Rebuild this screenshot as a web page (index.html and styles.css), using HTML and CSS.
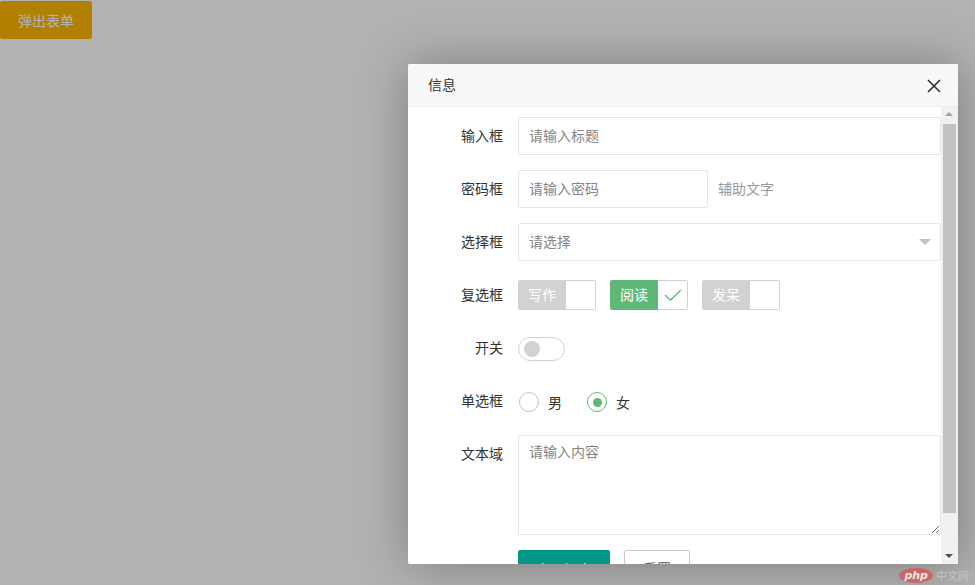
FILE: index.html
```html
<!DOCTYPE html>
<html lang="zh-CN">
<head>
<meta charset="utf-8">
<title>弹出表单</title>
<link rel="stylesheet" href="styles.css">
</head>
<body>
<div class="page">
  <button class="btn-warm">弹出表单</button>
</div>
<div class="shade"></div>
<div class="layer">
  <div class="layer-title">信息
    <svg class="layer-close" width="14" height="14" viewBox="0 0 14 14"><path d="M1 1 L13 13 M13 1 L1 13" stroke="#2f2f2f" stroke-width="1.6" fill="none"/></svg>
  </div>
  <div class="layer-content">
    <div class="pane">
      <form class="form">
        <div class="item">
          <label class="label">输入框</label>
          <div class="block"><input class="input" placeholder="请输入标题"></div>
        </div>
        <div class="item">
          <label class="label">密码框</label>
          <div class="inline"><input class="input" type="password" placeholder="请输入密码"></div>
          <div class="aux">辅助文字</div>
        </div>
        <div class="item">
          <label class="label">选择框</label>
          <div class="block select"><input class="input" placeholder="请选择" readonly><i class="edge"></i></div>
        </div>
        <div class="item">
          <label class="label">复选框</label>
          <div class="block row">
            <div class="cb"><span>写作</span><i></i></div>
            <div class="cb checked"><span>阅读</span><i><svg width="18" height="12" viewBox="0 0 18 12"><path d="M1 6 L6.5 11 L17 1" stroke="#5FB878" stroke-width="1.3" fill="none"/></svg></i></div>
            <div class="cb"><span>发呆</span><i></i></div>
          </div>
        </div>
        <div class="item">
          <label class="label">开关</label>
          <div class="block row"><div class="switch"><i></i></div></div>
        </div>
        <div class="item">
          <label class="label">单选框</label>
          <div class="block row">
            <div class="radio"><i class="circle"></i><span>男</span></div>
            <div class="radio on"><i class="circle"><b></b></i><span>女</span></div>
          </div>
        </div>
        <div class="item">
          <label class="label">文本域</label>
          <div class="block"><textarea class="textarea" placeholder="请输入内容"></textarea></div>
        </div>
        <div class="item">
          <div class="block offset row">
            <button type="button" class="btn">立即提交</button>
            <button type="button" class="btn btn-primary">重置</button>
          </div>
        </div>
      </form>
    </div>
    <div class="scrollbar">
      <div class="sb-btn up"></div>
      <div class="sb-track"><div class="sb-thumb"></div></div>
      <div class="sb-btn down"></div>
    </div>
  </div>
</div>
<div class="watermark"><span class="php">php</span><span class="cn">中文网</span></div>
</body>
</html>
```
FILE: styles.css
```css
* { box-sizing: border-box; }
html, body { margin: 0; padding: 0; }
body {
  width: 975px; height: 585px; overflow: hidden;
  background: #fff;
  font-family: "Helvetica Neue", Helvetica, "Noto Sans CJK SC", Arial, sans-serif;
  font-size: 14px; color: #333;
  position: relative;
}
.page { padding-top: 1px; }
.btn-warm {
  display: block; height: 38px; line-height: 38px; padding: 0 18px;
  background: #FFB800; color: #fff; border: none; border-radius: 2px;
  font: inherit; font-size: 14px;
}
.shade { position: absolute; left: 0; top: 0; width: 975px; height: 585px; background: rgba(0,0,0,0.3); }
.layer {
  position: absolute; left: 408px; top: 64px; width: 550px; height: 500px;
  background: #fff; border-radius: 2px;
  box-shadow: 1px 1px 50px rgba(0,0,0,.3);
  display: flex; flex-direction: column;
}
.layer-title {
  height: 43px; line-height: 42px; padding: 0 80px 0 20px;
  background: #F8F8F8; border-bottom: 1px solid #eee; color: #333;
  border-radius: 2px 2px 0 0; position: relative;
}
.layer-close { position: absolute; right: 17px; top: 15px; }
.layer-content { flex: 1; display: flex; overflow: hidden; }
.pane { flex: 1; overflow: hidden; }
.form { padding-top: 10px; margin: 0; }
.item { display: flex; align-items: flex-start; margin-bottom: 15px; min-height: 38px; }
.label {
  width: 110px; flex: none; padding: 9px 15px; line-height: 20px; text-align: right; color: #333;
}
.block { flex: 1; position: relative; }
.offset { margin-left: 110px; }
.row { display: flex; align-items: flex-start; }
.inline { width: 190px; margin-right: 10px; }
.aux { padding: 9px 0; line-height: 20px; color: #999; }
.input, .textarea {
  display: block; width: 100%; height: 38px; border: 1px solid #e6e6e6; border-radius: 2px;
  padding-left: 10px; font: inherit; font-size: 14px; color: #333; background: #fff; outline: none;
}
.input::placeholder, .textarea::placeholder { color: #858585; }
.textarea { height: 100px; padding: 6px 10px; line-height: 20px; resize: vertical; }
.edge {
  position: absolute; right: 10px; top: 50%; margin-top: -3px; width: 0; height: 0;
  border-width: 6px; border-style: solid; border-color: #c2c2c2 transparent transparent transparent;
}
.cb { display: flex; height: 30px; margin-top: 4px; margin-right: 14px; }
.cb span {
  padding: 0 10px; line-height: 30px; background: #d2d2d2; color: #fff; border-radius: 2px 0 0 2px;
}
.cb i {
  width: 30px; height: 30px; border: 1px solid #d2d2d2; border-left: none; border-radius: 0 2px 2px 0;
  display: flex; align-items: center; justify-content: center;
}
.cb.checked span { background: #5FB878; }
.switch {
  position: relative; margin-top: 8px; width: 47px; height: 24px; border: 1px solid #d2d2d2;
  border-radius: 20px; background: #fff;
}
.switch i {
  position: absolute; left: 5px; top: 3px; width: 16px; height: 16px; border-radius: 50%; background: #d2d2d2;
}
.radio { display: flex; align-items: center; margin: 6px 14px 0 0; height: 28px; padding-right: 10px; }
.circle {
  width: 20px; height: 20px; border: 1.5px solid #c2c2c2; border-radius: 50%; margin: 0 9px 0 1px;
  display: flex; align-items: center; justify-content: center;
}
.radio.on .circle { border-color: #5FB878; }
.circle b { width: 9px; height: 9px; border-radius: 50%; background: #5FB878; }
.radio span { color: #333; }
.btn {
  height: 38px; line-height: 38px; padding: 0 18px; border: none; border-radius: 2px;
  background: #009688; color: #fff; font: inherit; font-size: 14px; margin-right: 14px;
}
.btn-primary { background: #fff; color: #555; border: 1px solid #C9C9C9; line-height: 36px; width: 66px; }
.scrollbar { width: 17px; flex: none; background: #f1f1f1; display: flex; flex-direction: column; }
.sb-btn { height: 17px; position: relative; }
.sb-btn.up::after {
  content: ""; position: absolute; left: 4px; top: 5px; border: 4px solid transparent; border-bottom: 4px solid #a3a3a3; border-top: none;
}
.sb-btn.down::after {
  content: ""; position: absolute; left: 4px; top: 7px; border: 4px solid transparent; border-top: 4px solid #505050; border-bottom: none;
}
.sb-track { flex: 1; }
.sb-thumb { margin: 0 2px; height: 389px; background: #c1c1c1; }
.watermark {
  position: absolute; right: 6px; bottom: 2px; display: flex; align-items: center; gap: 3px;
  font-size: 11px;
}
.php {
  background: #d9534f; color: #fff; border-radius: 50%; padding: 0 5px; line-height: 15px;
  font-family: "DejaVu Sans", sans-serif; font-style: italic; font-weight: bold; opacity: 0.75;
}
.cn { color: #c4c4c4; font-family: "Noto Sans CJK SC", sans-serif; }
```
